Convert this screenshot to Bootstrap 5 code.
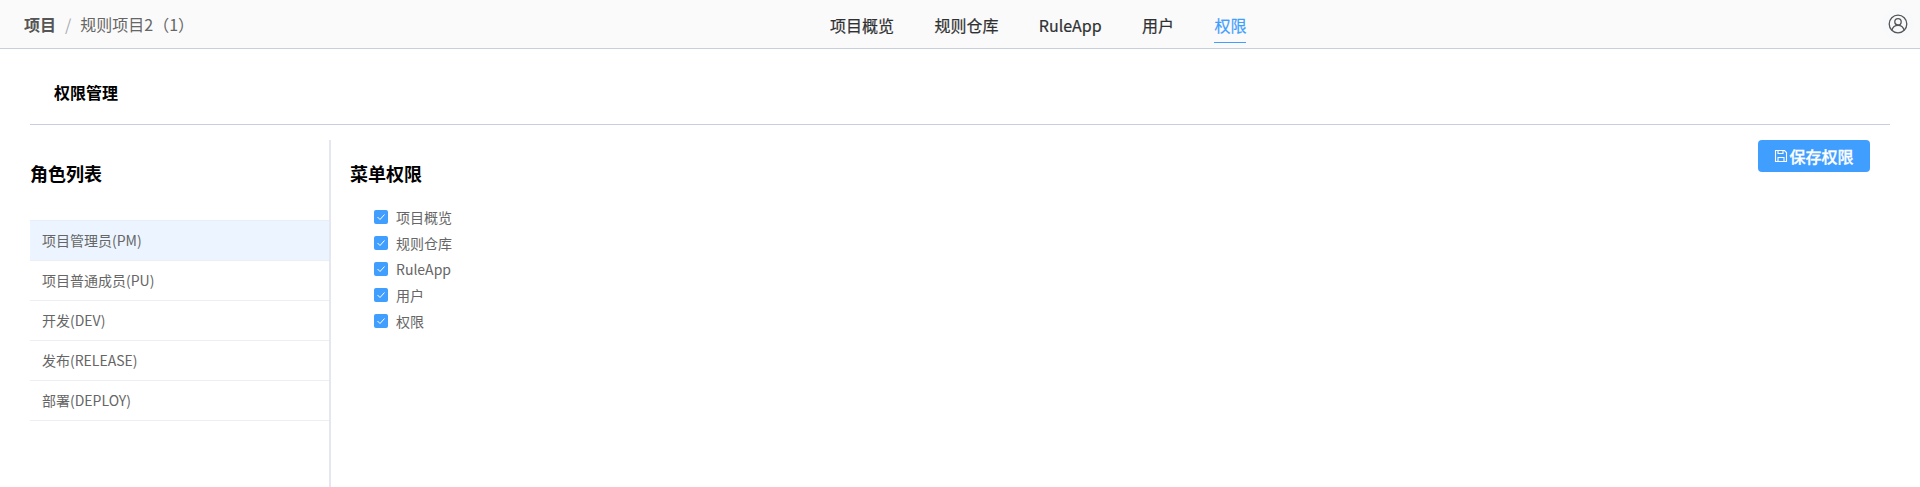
<!doctype html>
<html lang="zh">
<head>
<meta charset="utf-8">
<title>权限管理</title>
<link href="https://cdn.jsdelivr.net/npm/bootstrap@5.3.0/dist/css/bootstrap.min.css" rel="stylesheet">
<style>
html,body{height:487px;overflow:hidden;}
body{font-family:"Noto Sans CJK SC","Noto Sans",sans-serif;background:#fff;color:#606266;font-size:14px;}
.topbar{height:49px;background:#fafafa;border-bottom:1px solid #c9cede;padding:0 6px 0 24px;}
.crumbs{font-size:16px;line-height:24px;width:400px;}
.crumb-root{font-weight:700;color:#555;}
.crumb-sep{color:#a8abb2;margin:0 9px;}
.crumb-cur{color:#666;}
.mainnav{gap:40.4px;height:48px;}
.mainnav a{display:block;font-size:16px;line-height:24px;color:#303133;-webkit-text-stroke:.2px currentColor;text-decoration:none;padding:13px 0 5px;border-bottom:1px solid transparent;height:43px;}
.mainnav a.on{color:#409eff;border-bottom-color:#409eff;}
.usr{width:32px;height:32px;border-radius:50%;background:#f8f9fb;}
.pagewrap{padding:0 30px;}
.pagetitle{height:76px;border-bottom:1px solid #c9cede;padding-left:24px;font-size:16px;font-weight:700;color:#000;line-height:24px;padding-top:31px;}
.colleft{width:301px;height:347px;border-right:2px solid #e4e7f0;flex:none;margin-top:15px;}
.secttitle{font-size:18px;font-weight:700;color:#000;line-height:27px;margin:0;padding-top:20px;}
.rolelist{margin-top:33px;border-radius:0;}
.rolelist .list-group-item{height:40px;padding:0 12px;line-height:39px;border:0;border-bottom:1px solid #ebeef5;color:#666;font-size:14px;background:transparent;border-radius:0;}
.rolelist .list-group-item.on{background:#ecf5ff;border-top:1px solid #e8eef7;height:41px;}
.colright{padding:15px 16px 0 19px;}
.checks{margin-top:17px;padding-left:24px;}
.chk{height:26px;line-height:26px;color:#666;gap:8px;}
.box{width:14px;height:14px;border-radius:2px;background:#409eff;flex:none;}
.savebtn{width:112px;height:32px;padding:0;gap:1px;background:#409eff;border:0;border-radius:4px;color:#fff;font-size:16px;font-weight:500;-webkit-text-stroke:.3px #fff;line-height:32px;margin-right:4px;}
.savebtn:hover{background:#409eff;color:#fff;}
</style>
</head>
<body>
<header class="topbar d-flex align-items-center justify-content-between position-relative">
  <div class="crumbs"><span class="crumb-root">项目</span><span class="crumb-sep">/</span><span class="crumb-cur">规则项目2（1）</span></div>
  <nav class="mainnav d-flex position-absolute top-0" style="left:830px">
    <a href="#">项目概览</a><a href="#">规则仓库</a><a href="#">RuleApp</a><a href="#">用户</a><a href="#" class="on">权限</a>
  </nav>
  <div class="usr d-flex align-items-center justify-content-center">
    <svg width="20" height="20" viewBox="0 0 20 20" fill="none" stroke="#555" stroke-width="1.3"><circle cx="10" cy="10" r="8.8"/><circle cx="10" cy="7.8" r="3.2"/><path d="M3.9 16.2c.8-3 3.2-4.9 6.1-4.9s5.300 1.900 6.100 4.900"/></svg>
  </div>
</header>
<main class="pagewrap">
  <div class="pagetitle">权限管理</div>
  <div class="d-flex">
    <section class="colleft">
      <h2 class="secttitle">角色列表</h2>
      <div class="list-group rolelist">
        <div class="list-group-item on">项目管理员(PM)</div>
        <div class="list-group-item">项目普通成员(PU)</div>
        <div class="list-group-item">开发(DEV)</div>
        <div class="list-group-item">发布(RELEASE)</div>
        <div class="list-group-item">部署(DEPLOY)</div>
      </div>
    </section>
    <section class="colright flex-grow-1 d-flex justify-content-between align-items-start">
      <div>
        <h2 class="secttitle">菜单权限</h2>
        <div class="checks">
          <div class="chk d-flex align-items-center"><span class="box d-flex align-items-center justify-content-center"><svg width="10" height="8" viewBox="0 0 10 8" fill="none" stroke="#fff" stroke-width="1"><path d="M1.500 4l2.500 2.500 4.500-5"/></svg></span>项目概览</div>
          <div class="chk d-flex align-items-center"><span class="box d-flex align-items-center justify-content-center"><svg width="10" height="8" viewBox="0 0 10 8" fill="none" stroke="#fff" stroke-width="1"><path d="M1.500 4l2.500 2.500 4.500-5"/></svg></span>规则仓库</div>
          <div class="chk d-flex align-items-center"><span class="box d-flex align-items-center justify-content-center"><svg width="10" height="8" viewBox="0 0 10 8" fill="none" stroke="#fff" stroke-width="1"><path d="M1.500 4l2.500 2.500 4.500-5"/></svg></span>RuleApp</div>
          <div class="chk d-flex align-items-center"><span class="box d-flex align-items-center justify-content-center"><svg width="10" height="8" viewBox="0 0 10 8" fill="none" stroke="#fff" stroke-width="1"><path d="M1.500 4l2.500 2.500 4.500-5"/></svg></span>用户</div>
          <div class="chk d-flex align-items-center"><span class="box d-flex align-items-center justify-content-center"><svg width="10" height="8" viewBox="0 0 10 8" fill="none" stroke="#fff" stroke-width="1"><path d="M1.500 4l2.500 2.500 4.500-5"/></svg></span>权限</div>
        </div>
      </div>
      <button class="btn savebtn d-inline-flex align-items-center justify-content-center" type="button">
        <svg width="14" height="14" viewBox="0 0 14 14" fill="none" stroke="#fff" stroke-width="1.100"><path d="M1.500 1.500h9l2 2v9h-11z"/><path d="M4 12.500v-4h6v4M4 1.500v3h5v-3"/></svg>保存权限
      </button>
    </section>
  </div>
</main>
</body>
</html>
